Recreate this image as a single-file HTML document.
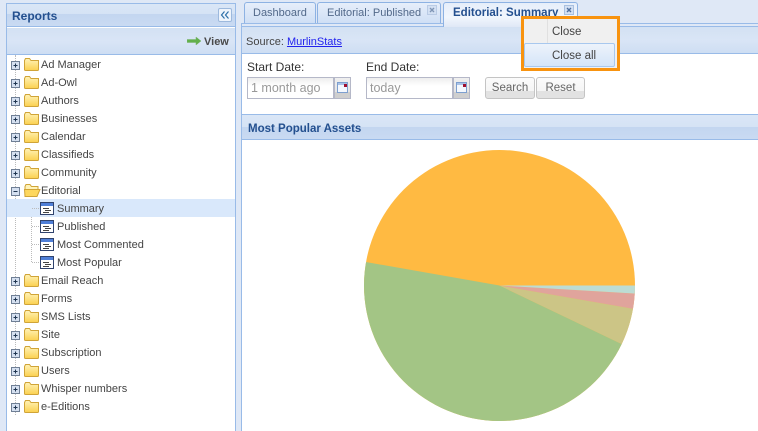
<!DOCTYPE html>
<html><head><meta charset="utf-8">
<style>
html,body{margin:0;padding:0;overflow:hidden}
body{width:758px;height:431px;position:relative;overflow:hidden;background:#dfe8f6;font-family:"Liberation Sans",sans-serif;font-size:11px;color:#444}
.a{position:absolute}
.row{position:absolute;left:7px;width:228px;height:18px;line-height:18px;white-space:nowrap}
.row .t{position:absolute;top:1px;left:34px}
.row.c .t{left:50px}
.row svg{position:absolute;top:0;left:0}
.tab{position:absolute;top:2px;height:21px;box-sizing:border-box;border:1px solid #8db2e3;border-bottom:0;border-radius:3px 3px 0 0;background:linear-gradient(#e6eefa,#cfdff5);color:#52698a;line-height:21px;font-size:11px;padding-left:8px;white-space:nowrap}
.lbl{position:absolute;font-size:12px;color:#333}
.inp{position:absolute;top:77px;height:22px;box-sizing:border-box;border:1px solid #b5b8c8;background:linear-gradient(#eee,#fff 40%);color:#999;font-size:12.5px;line-height:21px;padding-left:3px}
.trg{position:absolute;top:77px;width:17px;height:22px;box-sizing:border-box;border:1px solid #b5b8c8;background:linear-gradient(#efefef 0,#e6e6e6 70%,#cfcfcf 70%)}
.btn{position:absolute;top:77px;height:22px;box-sizing:border-box;border:1px solid #c4c4c4;border-radius:3px;background:linear-gradient(#fbfbfb 0,#f5f5f5 65%,#e2e2e2 65%,#e2e2e2);font-size:11.5px;color:#666;text-align:center;line-height:21px}
</style></head><body>

<svg width="0" height="0" style="position:absolute"><defs>
<linearGradient id="fg" x1="0" y1="0" x2="0" y2="1"><stop offset="0" stop-color="#fff3b8"/><stop offset="1" stop-color="#fbd04f"/></linearGradient>
<g id="p"><rect x="4.500" y="6.500" width="8" height="8" fill="#d5e0f0" stroke="#6f7f95"/><path d="M6.500 10.500h4M8.500 8.500v4" stroke="#1f3550" fill="none"/></g>
<g id="f"><path d="M17.500 5.500l1-2h4l1.500 2h7.500v9a1 1 0 0 1-1 1h-12a1 1 0 0 1-1-1z" fill="url(#fg)" stroke="#d0a437"/></g>
<g id="d"><rect x="33.500" y="3.500" width="13" height="12" fill="#fff" stroke="#30436d"/><rect x="34" y="4" width="12" height="3" fill="#4f7fd8"/><path d="M36 9.500h6M38 11.500h6M36 13.500h6" stroke="#444" fill="none"/></g>
<clipPath id="c1"><polygon points="499.500,285.500 232.500,238.500 232.500,600 741.500,600 741.500,401.500"/></clipPath>
<clipPath id="c2"><polygon points="499.500,285.500 741.500,401.500 764.500,331.500"/></clipPath>
<clipPath id="c3"><polygon points="499.500,285.500 764.500,331.500 769.500,301.500"/></clipPath>
<clipPath id="c4"><polygon points="499.500,285.500 769.500,301.500 769.500,285.500"/></clipPath>
</defs></svg>

<!-- left panel -->
<div class="a" style="left:6px;top:3px;width:230px;height:428px;box-sizing:border-box;border:1px solid #99bbe8;border-bottom:0;background:#fff"></div>
<div class="a" style="left:7px;top:4px;width:228px;height:23px;box-sizing:border-box;border-bottom:1px solid #99bbe8;background:linear-gradient(#dae6f6 0,#d5e3f5 45%,#c3d6f0 45%,#c9daf2)"></div>
<div class="a" style="left:12px;top:9px;font-weight:bold;font-size:12px;color:#24508f;line-height:14px">Reports</div>
<div class="a" style="left:218px;top:8px;width:14px;height:14px;box-sizing:border-box;border:1px solid #9db9dd;border-radius:2px;background:#eef4fc"><svg width="12" height="12" style="display:block"><path d="M5.500 2.500L2.500 6l3 3.500M9.500 2.500L6.500 6l3 3.500" stroke="#2c6fa8" stroke-width="1.200" fill="none"/></svg></div>
<div class="a" style="left:7px;top:28px;width:228px;height:27px;box-sizing:border-box;border-bottom:1px solid #99bbe8;background:linear-gradient(#d3e1f3,#d9e5f6 50%,#cedef3)"></div>
<svg class="a" style="left:187px;top:36px" width="15" height="10"><path d="M0 3.500h9V1l5 4-5 4V6.500H0z" fill="#62b04c" stroke="#7bb36a" stroke-width=".5"/></svg>
<div class="a" style="left:204px;top:35px;font-weight:bold;font-size:11px;color:#4a4a4a;line-height:14px">View</div>

<!-- tree dotted -->
<div class="a" style="left:15px;top:55px;height:360px;border-left:1px dotted #bbb"></div>
<div class="a" style="left:31px;top:199px;height:63px;border-left:1px dotted #bbb"></div>
<div class="a" style="left:7px;top:199px;width:228px;height:18px;background:#d9e8fb"></div>

<div class="row" style="top:55px"><svg width="40" height="18"><use href="#p"/><use href="#f"/></svg><span class="t">Ad Manager</span></div>
<div class="row" style="top:73px"><svg width="40" height="18"><use href="#p"/><use href="#f"/></svg><span class="t">Ad-Owl</span></div>
<div class="row" style="top:91px"><svg width="40" height="18"><use href="#p"/><use href="#f"/></svg><span class="t">Authors</span></div>
<div class="row" style="top:109px"><svg width="40" height="18"><use href="#p"/><use href="#f"/></svg><span class="t">Businesses</span></div>
<div class="row" style="top:127px"><svg width="40" height="18"><use href="#p"/><use href="#f"/></svg><span class="t">Calendar</span></div>
<div class="row" style="top:145px"><svg width="40" height="18"><use href="#p"/><use href="#f"/></svg><span class="t">Classifieds</span></div>
<div class="row" style="top:163px"><svg width="40" height="18"><use href="#p"/><use href="#f"/></svg><span class="t">Community</span></div>
<div class="row" style="top:181px"><svg width="40" height="18"><rect x="4.500" y="6.500" width="8" height="8" fill="#d5e0f0" stroke="#6f7f95"/><path d="M6.500 10.500h4" stroke="#1f3550"/><path d="M18 5.500l1-2h4l1.500 2h6.500v3h-13z" fill="#fff3b8" stroke="#d0a437"/><path d="M17.500 8.500h15.500l-3 7h-12z" fill="#fdd75e" stroke="#d0a437"/></svg><span class="t">Editorial</span></div>
<div class="row c" style="top:199px"><svg width="50" height="18"><path d="M25 9.500h8" stroke="#bbb" stroke-dasharray="1 1"/><use href="#d"/></svg><span class="t">Summary</span></div>
<div class="row c" style="top:217px"><svg width="50" height="18"><path d="M25 9.500h8" stroke="#bbb" stroke-dasharray="1 1"/><use href="#d"/></svg><span class="t">Published</span></div>
<div class="row c" style="top:235px"><svg width="50" height="18"><path d="M25 9.500h8" stroke="#bbb" stroke-dasharray="1 1"/><use href="#d"/></svg><span class="t">Most Commented</span></div>
<div class="row c" style="top:253px"><svg width="50" height="18"><path d="M25 9.500h8" stroke="#bbb" stroke-dasharray="1 1"/><use href="#d"/></svg><span class="t">Most Popular</span></div>
<div class="row" style="top:271px"><svg width="40" height="18"><use href="#p"/><use href="#f"/></svg><span class="t">Email Reach</span></div>
<div class="row" style="top:289px"><svg width="40" height="18"><use href="#p"/><use href="#f"/></svg><span class="t">Forms</span></div>
<div class="row" style="top:307px"><svg width="40" height="18"><use href="#p"/><use href="#f"/></svg><span class="t">SMS Lists</span></div>
<div class="row" style="top:325px"><svg width="40" height="18"><use href="#p"/><use href="#f"/></svg><span class="t">Site</span></div>
<div class="row" style="top:343px"><svg width="40" height="18"><use href="#p"/><use href="#f"/></svg><span class="t">Subscription</span></div>
<div class="row" style="top:361px"><svg width="40" height="18"><use href="#p"/><use href="#f"/></svg><span class="t">Users</span></div>
<div class="row" style="top:379px"><svg width="40" height="18"><use href="#p"/><use href="#f"/></svg><span class="t">Whisper numbers</span></div>
<div class="row" style="top:397px"><svg width="40" height="18"><use href="#p"/><use href="#f"/></svg><span class="t">e-Editions</span></div>

<!-- right panel -->
<div class="a" style="left:241px;top:23px;width:517px;height:408px;box-sizing:border-box;border:1px solid #99bbe8;border-right:0;border-bottom:0;background:#fff"></div>
<div class="a" style="left:242px;top:24px;width:516px;height:2px;background:#dfe8f6"></div>
<div class="a" style="left:241px;top:26px;width:517px;height:1px;background:#99bbe8"></div>
<div class="a" style="left:242px;top:27px;width:516px;height:27px;box-sizing:border-box;border-bottom:1px solid #99bbe8;background:linear-gradient(#d3e1f3,#d9e5f6 50%,#cedef3)"></div>
<div class="a" style="left:246px;top:35px;font-size:11px;line-height:14px;color:#444">Source: <span style="color:#2222ee;text-decoration:underline">MurlinStats</span></div>

<div class="tab" style="left:244px;width:72px">Dashboard</div>
<div class="tab" style="left:317px;width:124px;padding-left:9px">Editorial: Published</div>
<svg class="a" style="left:427px;top:5px" width="11" height="11"><rect x=".5" y=".5" width="9" height="9" fill="#d3e0f3" stroke="#b9cbe5"/><path d="M3 3l4 4M7 3l-4 4" stroke="#7f95b5" stroke-width="1.400"/></svg>
<div class="tab" style="left:443px;width:135px;height:25px;background:linear-gradient(#e6eefa,#f1f6fd 60%,#dfe8f6);color:#24508f;font-weight:bold;font-size:11.5px;padding-left:9px;z-index:2">Editorial: Summary</div>
<svg class="a" style="left:564px;top:5px;z-index:3" width="11" height="11"><rect x=".5" y=".5" width="9" height="9" fill="#d3e0f3" stroke="#a9c0e0"/><path d="M3 3l4 4M7 3l-4 4" stroke="#4f6f9f" stroke-width="1.400"/></svg>

<div class="lbl" style="left:247px;top:60px">Start Date:</div>
<div class="lbl" style="left:366px;top:60px">End Date:</div>
<div class="inp" style="left:247px;width:87px">1 month ago</div>
<div class="trg" style="left:334px"><svg width="15" height="20" style="display:block"><rect x="2.500" y="4.500" width="10" height="10" fill="#f4f8fe" stroke="#7d9fcf"/><rect x="3" y="5" width="9" height="2" fill="#a9c3e8"/><rect x="9" y="6" width="3" height="3" fill="#a01030"/></svg></div>
<div class="inp" style="left:366px;width:87px">today</div>
<div class="trg" style="left:453px"><svg width="15" height="20" style="display:block"><rect x="2.500" y="4.500" width="10" height="10" fill="#f4f8fe" stroke="#7d9fcf"/><rect x="3" y="5" width="9" height="2" fill="#a9c3e8"/><rect x="9" y="6" width="3" height="3" fill="#a01030"/></svg></div>
<div class="btn" style="left:485px;width:50px">Search</div>
<div class="btn" style="left:536px;width:49px">Reset</div>

<!-- chart panel -->
<div class="a" style="left:242px;top:114px;width:516px;height:26px;box-sizing:border-box;border-top:1px solid #99bbe8;border-bottom:1px solid #99bbe8;background:linear-gradient(#dae6f6 0,#d5e3f5 50%,#c3d6f0 50%,#c9daf2)"></div>
<div class="a" style="left:248px;top:122px;font-weight:bold;font-size:11.5px;line-height:14px;color:#24508f">Most Popular Assets</div>

<svg class="a" style="left:242px;top:140px" width="516" height="291">
<g transform="translate(-242 -140)">
<circle cx="499.500" cy="285.500" r="135.500" fill="#ffba42"/>
<circle cx="499.500" cy="285.500" r="135.500" fill="#a3c585" clip-path="url(#c1)"/>
<circle cx="499.500" cy="285.500" r="135.500" fill="#ccc586" clip-path="url(#c2)"/>
<circle cx="499.500" cy="285.500" r="135.500" fill="#e0a49c" clip-path="url(#c3)"/>
<circle cx="499.500" cy="285.500" r="135.500" fill="#bcdcd4" clip-path="url(#c4)"/>
</g></svg>

<!-- context menu -->
<div class="a" style="left:521px;top:16px;width:99px;height:55px;box-sizing:border-box;border:3px solid #f8930f;background:#f0f0f0;z-index:5">
<div class="a" style="left:23px;top:0;width:1px;height:24px;background:#e0e0e0"></div>
<div class="a" style="left:0;top:1px;width:93px;height:24px;line-height:24px;padding-left:28px;box-sizing:border-box;font-size:11.500px;color:#444">Close</div>
<div class="a" style="left:0;top:24px;width:91px;height:24px;box-sizing:border-box;border:1px solid #a8c8ee;border-radius:2px;background:linear-gradient(#edf3fb,#d5e5f8);line-height:24px;padding-left:27px;font-size:11.500px;color:#444">Close all</div>
</div>
</body></html>
